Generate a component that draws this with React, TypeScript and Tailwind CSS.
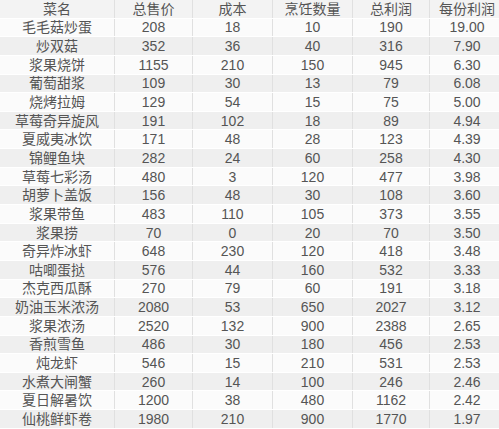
const header = ["菜名", "总售价", "成本", "烹饪数量", "总利润", "每份利润"];

const rows: [string, number, number, number, number, string][] = [
  ["毛毛菇炒蛋", 208, 18, 10, 190, "19.00"],
  ["炒双菇", 352, 36, 40, 316, "7.90"],
  ["浆果烧饼", 1155, 210, 150, 945, "6.30"],
  ["葡萄甜浆", 109, 30, 13, 79, "6.08"],
  ["烧烤拉姆", 129, 54, 15, 75, "5.00"],
  ["草莓奇异旋风", 191, 102, 18, 89, "4.94"],
  ["夏威夷冰饮", 171, 48, 28, 123, "4.39"],
  ["锦鲤鱼块", 282, 24, 60, 258, "4.30"],
  ["草莓七彩汤", 480, 3, 120, 477, "3.98"],
  ["胡萝卜盖饭", 156, 48, 30, 108, "3.60"],
  ["浆果带鱼", 483, 110, 105, 373, "3.55"],
  ["浆果捞", 70, 0, 20, 70, "3.50"],
  ["奇异炸冰虾", 648, 230, 120, 418, "3.48"],
  ["咕唧蛋挞", 576, 44, 160, 532, "3.33"],
  ["杰克西瓜酥", 270, 79, 60, 191, "3.18"],
  ["奶油玉米浓汤", 2080, 53, 650, 2027, "3.12"],
  ["浆果浓汤", 2520, 132, 900, 2388, "2.65"],
  ["香煎雪鱼", 486, 30, 180, 456, "2.53"],
  ["炖龙虾", 546, 15, 210, 531, "2.53"],
  ["水煮大闸蟹", 260, 14, 100, 246, "2.46"],
  ["夏日解暑饮", 1200, 38, 480, 1162, "2.42"],
  ["仙桃鲜虾卷", 1980, 210, 900, 1770, "1.97"],
];

const grid = "grid grid-cols-[115px_78px_80px_80px_77px_74px] h-[18.65px]";

function Cell({ children, last }: { children: React.ReactNode; last?: boolean }) {
  return (
    <div
      className={
        "flex items-center justify-center leading-none " +
        (last ? "" : "border-r border-[#e0e0e0]")
      }
    >
      {children}
    </div>
  );
}

export default function App() {
  return (
    <div
      className="w-[499px] h-[429px] overflow-hidden bg-white text-[14px] text-[#555555]"
      style={{ fontFamily: '"Liberation Sans", "Noto Sans CJK SC", sans-serif' }}
    >
      <div className={grid + " bg-[#f3f3f3] border-b border-white"}>
        {header.map((h, i) => (
          <Cell key={h} last={i === header.length - 1}>
            {h}
          </Cell>
        ))}
      </div>
      {rows.map((r, idx) => (
        <div
          key={r[0]}
          className={
            grid +
            " border-b border-white " +
            (idx % 2 === 0 ? "bg-[#fbfbfb]" : "bg-[#efefef]")
          }
        >
          {r.map((v, i) => (
            <Cell key={i} last={i === r.length - 1}>
              {v}
            </Cell>
          ))}
        </div>
      ))}
    </div>
  );
}
